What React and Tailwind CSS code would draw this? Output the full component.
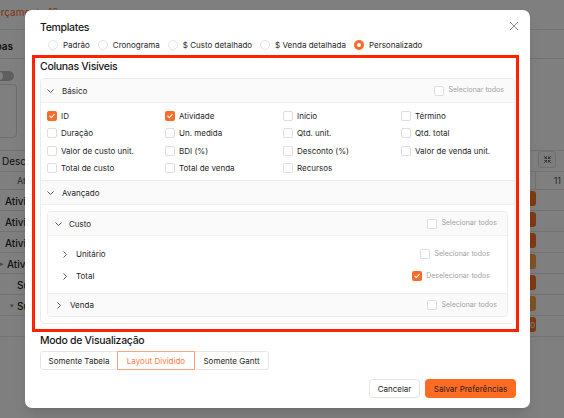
import { Shrink } from 'lucide-react'

// Column preferences modal over the dimmed schedule page.
const basicCols = [
  ['ID', true], ['Atividade', true], ['Início', false], ['Término', false],
  ['Duração', false], ['Un. medida', false], ['Qtd. unit.', false], ['Qtd. total', false],
  ['Valor de custo unit.', false], ['BDI (%)', false], ['Desconto (%)', false], ['Valor de venda unit.', false],
  ['Total de custo', false], ['Total de venda', false], ['Recursos', false],
]

const templates = [
  ['Padrão', false], ['Cronograma', false], ['$ Custo detalhado', false],
  ['$ Venda detalhada', false], ['Personalizado', true],
]

const rows = [
  { label: 'Atividade 1', pad: 'pl-[5px]', bar: 'bg-[#ff7428]' },
  { label: 'Atividade 2', pad: 'pl-[5px]', bar: 'bg-[#ff7428]' },
  { label: 'Atividade 3', pad: 'pl-[5px]', bar: 'bg-[#ff7428]' },
  { label: 'Atividade 4', pad: 'pl-[7px]', caret: '▸', bar: 'bg-[#ffa44a]' },
  { label: 'Subtotal', pad: 'pl-[17px]', bar: 'bg-[#ff7428]' },
  { label: 'Subtotal', pad: 'pl-[17px]', caret: '▾', bar: 'bg-[#ffa44a]' },
  { label: '', pad: '', bar: 'bg-[#ff7428]', text: '0' },
]

function Box({ checked }) {
  if (checked) {
    return (
      <span className="flex h-[10px] w-[10px] shrink-0 items-center justify-center rounded-[2px] bg-[#fa6b27]">
        <svg viewBox="0 0 10 10" className="h-[8px] w-[8px]">
          <path d="M2.2 5.2 4.2 7 7.8 3" fill="none" stroke="white" strokeWidth="1.5" strokeLinecap="round" strokeLinejoin="round" />
        </svg>
      </span>
    )
  }
  return <span className="h-[10px] w-[10px] shrink-0 rounded-[2px] border border-[#dedede] bg-white" />
}

function SelectAll({ checked, label = 'Selecionar todos' }) {
  return (
    <div className="flex items-center gap-[4px] text-[7px] text-[#a3a3a3]">
      <Box checked={checked} />
      <span>{label}</span>
    </div>
  )
}

function Down() {
  return (
    <svg width="7" height="4" viewBox="0 0 7 4" className="shrink-0">
      <path d="M0.5 0.5 3.5 3.5 6.5 0.5" fill="none" stroke="#444" strokeWidth="0.9" />
    </svg>
  )
}

function Right() {
  return (
    <svg width="4" height="7" viewBox="0 0 4 7" className="shrink-0">
      <path d="M0.5 0.5 3.5 3.5 0.5 6.5" fill="none" stroke="#444" strokeWidth="0.9" />
    </svg>
  )
}

function Radio({ checked }) {
  if (checked) {
    return (
      <span className="flex h-[10px] w-[10px] items-center justify-center rounded-full bg-[#fa6b27]">
        <span className="h-[4px] w-[4px] rounded-full bg-white" />
      </span>
    )
  }
  return <span className="h-[10px] w-[10px] rounded-full border border-[#e3e3e3] bg-white" />
}

function Background() {
  return (
    <div className="flex h-full w-full flex-col bg-white text-[10px] text-[#262626]">
      <div className="flex h-[30px] items-start border-b border-[#e5e5e5] pt-[5px]">
        <span className="-ml-[7px] whitespace-nowrap text-[#ff6a1a]">Orçamento 12</span>
      </div>
      <div className="flex h-[29px] items-center border-b border-[#e5e5e5] pt-[4px]">
        <div className="flex w-[13px] justify-end">
          <span className="whitespace-nowrap font-semibold">Etapas</span>
        </div>
      </div>
      <div className="flex h-[91px] flex-col pt-[12px]">
        <span className="-ml-[6px] flex h-[10px] w-[20px] items-center rounded-full bg-[#bdbdbd] pl-[1px]">
          <span className="h-[8px] w-[8px] rounded-full bg-white" />
        </span>
        <div className="-ml-[10px] mt-[3px] h-[54px] w-[27px] rounded-[4px] border border-[#dcdcdc]" />
      </div>
      <div className="flex h-[22px] items-start justify-between border-y border-[#e5e5e5]">
        <span className="pl-[2px] pt-[3px] whitespace-nowrap">Descontos</span>
        <span className="mr-[8px] flex h-[17px] w-[18px] items-center justify-center rounded-[3px] border border-[#e0e0e0] bg-[#fafafa]">
          <Shrink size={9} strokeWidth={1.6} color="#333" />
        </span>
      </div>
      <div className="flex h-[18px] items-center justify-between border-b border-[#e5e5e5] text-[9px] text-[#595959]">
        <span className="pl-[17px]">Atividade</span>
        <span className="flex h-full w-[29px] items-center justify-end border-l border-[#e5e5e5] pr-[3px]">11</span>
      </div>
      {rows.map((r, i) => (
        <div key={i} className="flex h-[21px] items-start justify-between border-b border-[#e5e5e5]">
          <span className={`flex items-center gap-[3px] pt-[4px] font-medium whitespace-nowrap ${r.pad}`}>
            {r.caret && <span className="-ml-[7px] text-[7px] text-[#8c8c8c]">{r.caret}</span>}
            {r.label}
          </span>
          <span className={`mr-[28px] mt-[1px] flex h-[15px] w-[30px] items-center justify-end rounded-[3px] pr-[1px] text-[8px] text-white ${r.bar}`}>
            {r.text}
          </span>
        </div>
      ))}
    </div>
  )
}

export default function App() {
  return (
    <div className="relative h-[418px] w-[564px] overflow-hidden font-['Inter',sans-serif]">
      <Background />
      <div className="absolute inset-0 bg-black/50" />

      <div className="absolute left-[25px] top-[10px] flex h-[398px] w-[505px] flex-col rounded-[7px] bg-white px-[15px] text-[#1a1a1a] shadow-lg">
        <div className="flex items-start justify-between pt-[11px]">
          <h2 className="text-[10.5px] font-medium leading-[14px] tracking-[-0.03em]">Templates</h2>
          <svg width="10" height="10" viewBox="0 0 10 10" className="-mr-[4px]">
            <path d="M1 1 9 9M9 1 1 9" stroke="#8c8c8c" strokeWidth="1" />
          </svg>
        </div>

        <div className="mt-[3px] flex h-[14px] items-center gap-[8px] pl-[8px] text-[8px] text-[#262626]">
          {templates.map(([t, on]) => (
            <label key={t} className="flex items-center gap-[5px]">
              <Radio checked={on} />
              <span>{t}</span>
            </label>
          ))}
        </div>

        <h3 className="mt-[7px] text-[10.5px] font-medium leading-[16px] tracking-[-0.03em]">Colunas Visíveis</h3>

        <div className="mt-[3px] rounded-[4px] border border-[#ececec] text-[8px] text-[#1f1f1f]">
          <div className="flex h-[23px] items-center justify-between rounded-t-[4px] bg-[#fafafa] pl-[6px] pr-[10px]">
            <div className="flex items-center gap-[8px]">
              <Down />
              <span>Básico</span>
            </div>
            <SelectAll />
          </div>
          <div className="grid grid-cols-[118px_118px_118px_118px] border-t border-[#f0f0f0] pb-[3px] pl-[6px] pt-[4px]">
            {basicCols.map(([c, on]) => (
              <div key={c} className="flex h-[17.5px] items-center gap-[4px]">
                <Box checked={on} />
                <span className="whitespace-nowrap">{c}</span>
              </div>
            ))}
          </div>

          <div className="flex h-[24px] items-center gap-[8px] border-t border-[#ececec] bg-[#fafafa] pl-[6px]">
            <Down />
            <span>Avançado</span>
          </div>
          <div className="border-t border-[#f0f0f0] px-[6px] pb-[6px] pt-[6px]">
            <div className="rounded-[4px] border border-[#ececec]">
              <div className="flex h-[23px] items-center justify-between rounded-t-[4px] bg-[#fafafa] pl-[7px] pr-[10px]">
                <div className="flex items-center gap-[7px]">
                  <Down />
                  <span>Custo</span>
                </div>
                <SelectAll />
              </div>
              <div className="flex flex-col border-t border-[#f0f0f0] pb-[6px] pl-[15px] pr-[17px] pt-[7px]">
                <div className="flex h-[22px] items-center justify-between">
                  <div className="flex items-center gap-[9px]">
                    <Right />
                    <span>Unitário</span>
                  </div>
                  <SelectAll />
                </div>
                <div className="flex h-[22px] items-center justify-between">
                  <div className="flex items-center gap-[9px]">
                    <Right />
                    <span>Total</span>
                  </div>
                  <SelectAll checked label="Deselecionar todos" />
                </div>
              </div>
              <div className="flex h-[23px] items-center justify-between rounded-b-[4px] border-t border-[#ececec] bg-[#fafafa] pl-[9px] pr-[10px]">
                <div className="flex items-center gap-[9px]">
                  <Right />
                  <span>Venda</span>
                </div>
                <SelectAll />
              </div>
            </div>
          </div>
        </div>

        <h3 className="mt-[9px] text-[10.5px] font-medium leading-[16px] tracking-[-0.03em]">Modo de Visualização</h3>
        <div className="mt-[2px] flex h-[19px] text-[8px] text-[#262626]">
          <button className="w-[78px] rounded-l-[3px] border border-[#e6e6e6] bg-white">Somente Tabela</button>
          <button className="relative -ml-px w-[78px] border border-[#ffa47b] bg-white text-[#ff7a3d]">Layout Dividido</button>
          <button className="-ml-px w-[75px] rounded-r-[3px] border border-[#e6e6e6] bg-white">Somente Gantt</button>
        </div>

        <div className="-mr-[1px] mt-[9px] flex justify-end gap-[5px] text-[8px]">
          <button className="h-[19px] w-[51px] rounded-[4px] border border-[#e3e3e3] bg-white text-[#262626]">Cancelar</button>
          <button className="h-[19px] w-[91px] rounded-[4px] bg-[#ff6b22] text-[#222]">Salvar Preferências</button>
        </div>

        <div className="pointer-events-none absolute left-[7px] top-[45px] h-[277px] w-[487px] border-[3px] border-[#ff2200]" />
      </div>
    </div>
  )
}
